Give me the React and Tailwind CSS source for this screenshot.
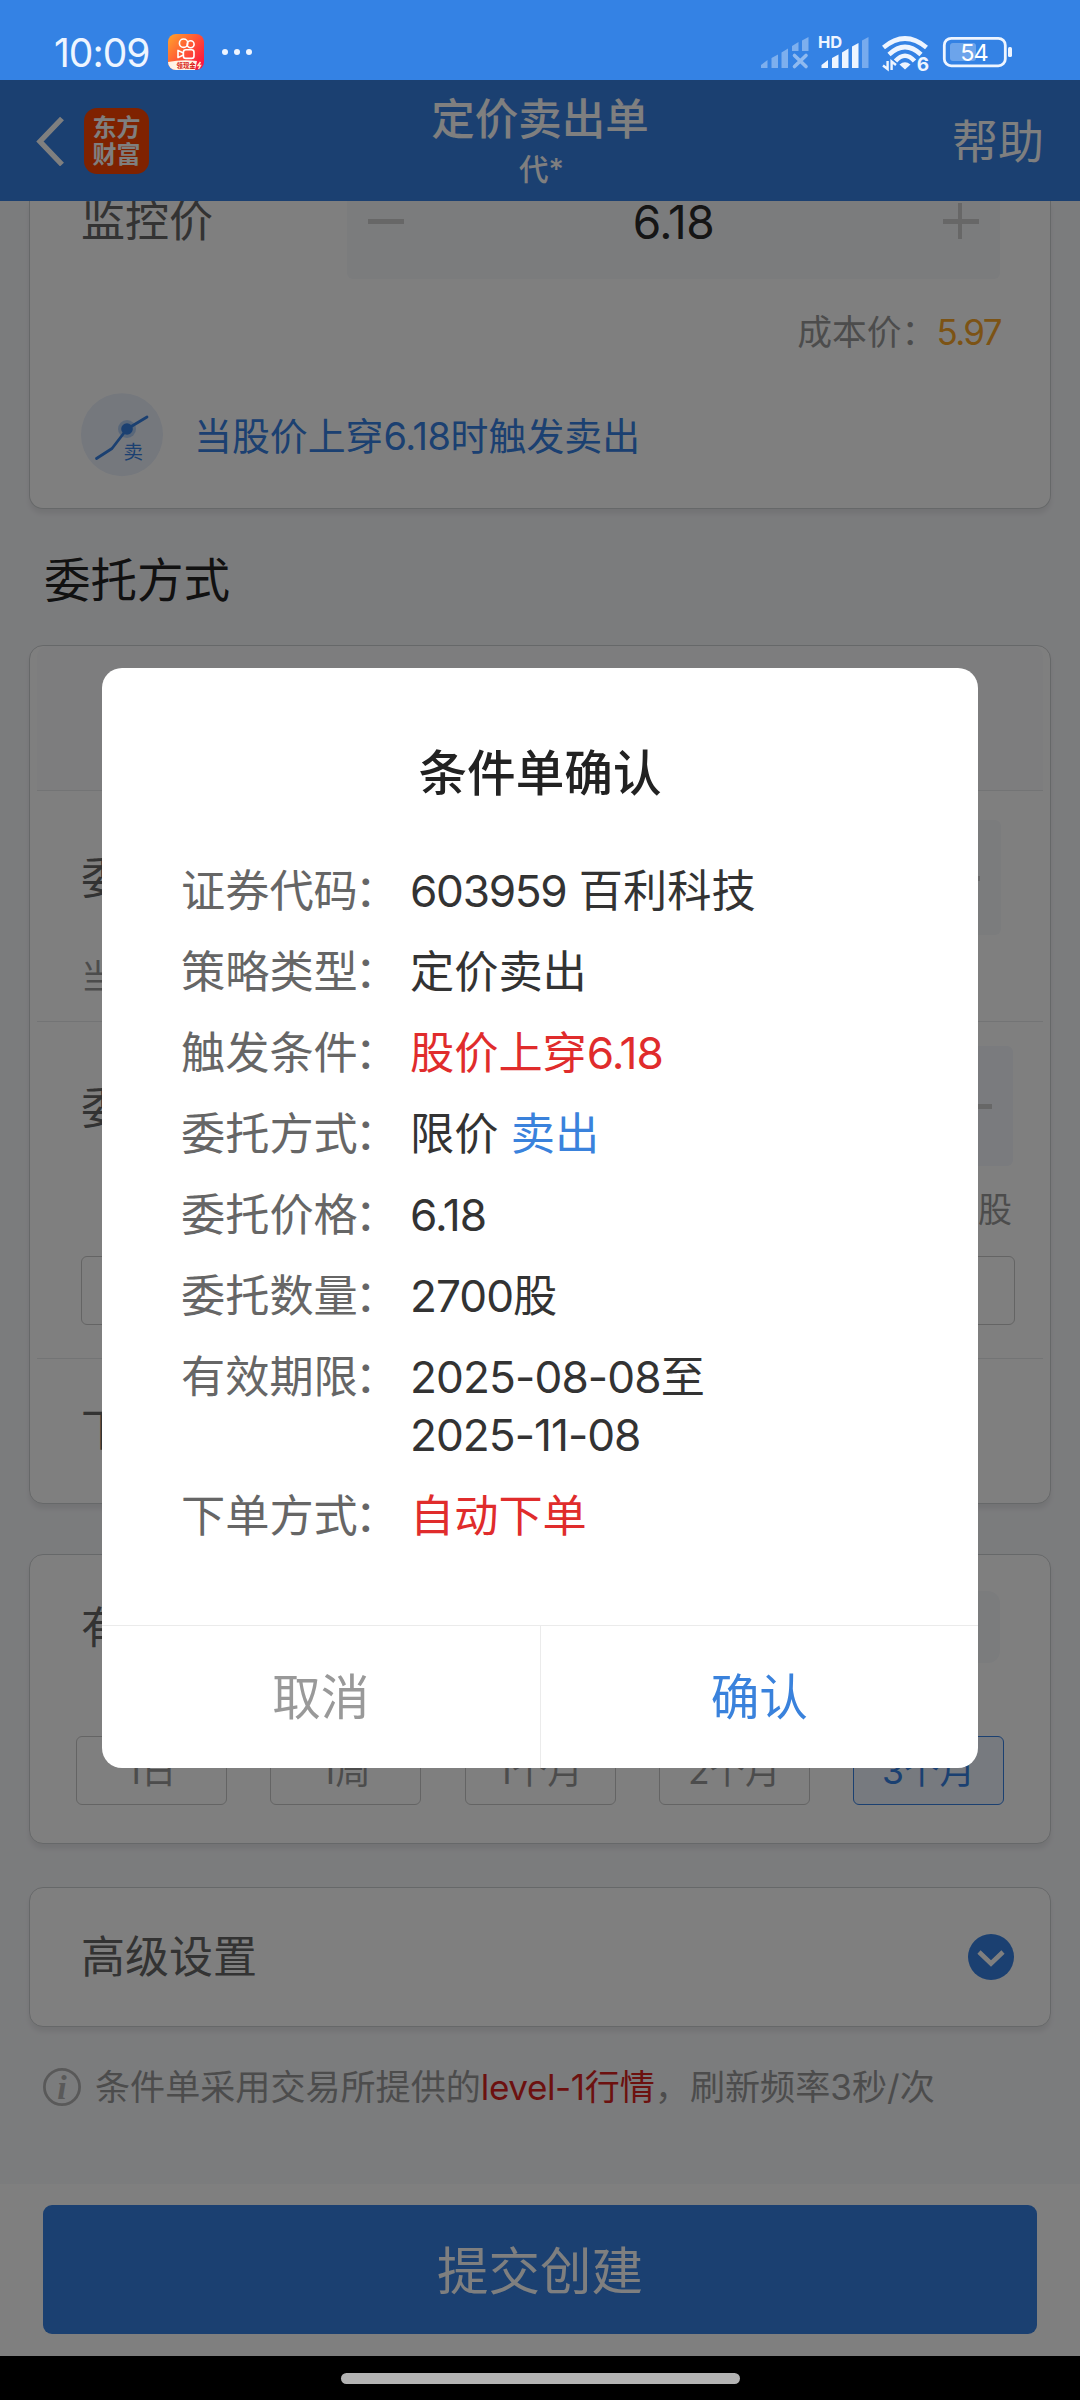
import React from "react";

const CARD =
  "mx-[29px] flex flex-col rounded-[14px] border border-[#cdd0d2] bg-white shadow-[0_5px_5px_rgba(0,0,0,0.07)]";

function AppBadge() {
  return (
    <svg width="36" height="36" viewBox="0 0 36 36">
      <defs>
        <linearGradient id="kg" x1="0" y1="0" x2="1" y2="0.8">
          <stop offset="0" stopColor="#ffa52b" />
          <stop offset="0.5" stopColor="#ff5a35" />
          <stop offset="1" stopColor="#fb1440" />
        </linearGradient>
        <clipPath id="kc">
          <rect width="36" height="36" rx="8" />
        </clipPath>
      </defs>
      <g clipPath="url(#kc)">
        <rect width="36" height="36" fill="url(#kg)" />
        <path d="M0 28 Q14 25 29 27 L27 36 H0Z" fill="#fff3e6" />
        <text x="8.6" y="34" fontSize="6.4" fontWeight="700" fill="#d8180f" fontFamily="Noto Sans CJK SC, sans-serif">领现金</text>
        <path d="M32.5 28 L30 31.5 H32.5 L30.5 35" stroke="#ffe9c0" strokeWidth="1.5" fill="none" />
        <g fill="none" stroke="#fff" strokeWidth="1.6">
          <circle cx="15.6" cy="9.2" r="4.2" />
          <circle cx="22.6" cy="10.2" r="3.5" />
          <rect x="15.4" y="15.8" width="10.6" height="8.6" rx="2.4" />
          <path d="M15.4 19 L10 16.4 V23.6 L15.4 21" strokeLinejoin="round" />
        </g>
      </g>
    </svg>
  );
}

function StatusIcons() {
  return (
    <svg width="256" height="40" viewBox="760 33 256 40" className="font-['Inter','Noto_Sans_CJK_SC',sans-serif]">
      <path
        d="M761 68 V65 L767.5 60 V68Z M771.5 68 V58 L778 54.5 V68Z M781.5 68 V52.5 L788 48.5 V68Z M792 51 V46 L798.5 42 V51Z M802 51 V40.5 L808.5 37 V51Z"
        fill="#fff"
        opacity="0.36"
      />
      <path d="M794.5 55.5 L806 66.5 M806 55.5 L794.5 66.5" stroke="#fff" strokeWidth="3.6" strokeLinecap="round" opacity="0.45" />
      <text x="818" y="48" fontSize="16.5" fontWeight="700" fill="#eef5ff" letterSpacing="-0.2">HD</text>
      <g fill="#eef5ff">
        <path d="M821.5 68 V65 L828 60 V68Z M832 68 V58 L838.5 54.5 V68Z M842 68 V52.5 L848.5 48.5 V68Z M852 68 V46.5 L858.5 43 V68Z" />
        <path d="M862 68 V40.5 L868.5 37 V68Z" opacity="0.36" />
      </g>
      <g fill="none" stroke="#eef5ff" strokeWidth="4.6">
        <path d="M883.5 47.5 Q905 29.5 926.5 47.5" />
        <path d="M889 54.5 Q905 39.5 921 54.5" />
        <path d="M895.5 61 Q905 50.5 914.5 61" />
      </g>
      <path d="M899.5 64.5 Q905 60 910.5 64.5 L905 69.5Z" fill="#eef5ff" />
      <path d="M887.6 61 V69 L883 65.5 M891.6 70 V61.5 L896 65" stroke="#eef5ff" strokeWidth="2.4" fill="none" />
      <text x="916.8" y="70.5" fontSize="19" fontWeight="700" fill="#eef5ff">6</text>
      <rect x="944.3" y="38.3" width="61" height="27.6" rx="7" fill="none" stroke="#eef5ff" strokeWidth="2.8" />
      <rect x="950" y="43" width="26" height="18" rx="3" fill="#fff" opacity="0.28" />
      <rect x="1008" y="47" width="4" height="10" rx="1.6" fill="#eef5ff" />
      <text x="974" y="60.8" fontSize="23.5" textAnchor="middle" fill="#fff" fontWeight="400" letterSpacing="-1">54</text>
    </svg>
  );
}

function StatusBar() {
  return (
    <div className="flex h-[80px] items-start bg-[#3482e4] text-[#eef5ff]">
      <div className="mt-[32px] ml-[54px] w-[114px] text-[39px] leading-[41px] tracking-[-1px]">10:09</div>
      <div className="mt-[34px]"><AppBadge /></div>
      <div className="mt-[49px] ml-[18px] flex gap-[6px]">
        <i className="size-[6px] rounded-full bg-[#eef5ff]" />
        <i className="size-[6px] rounded-full bg-[#eef5ff]" />
        <i className="size-[6px] rounded-full bg-[#eef5ff]" />
      </div>
      <div className="mt-[33px] mr-[64px] ml-auto"><StatusIcons /></div>
    </div>
  );
}

function Header() {
  return (
    <header className="flex h-[121px] shrink-0 items-center bg-[#3680e2] text-white">
      <div className="flex w-[320px] items-center pl-[36px]">
        <svg width="28" height="50" viewBox="0 0 28 50" className="shrink-0">
          <path d="M26 2.5 L4 25.5 L26 48.5" fill="none" stroke="#fff" strokeWidth="5.4" />
        </svg>
        <div className="ml-[20px] flex h-[66px] w-[65px] flex-col items-center justify-center rounded-[13px] bg-[#ff4400] text-[24px] leading-[27px] font-bold">
          <span>东方</span>
          <span>财富</span>
        </div>
      </div>
      <div className="flex flex-1 flex-col items-center">
        <div className="mt-px text-[43.5px] leading-[56px] font-medium">定价卖出单</div>
        <div className="pl-[3px] text-[29.5px] leading-[44px] font-medium">代*</div>
      </div>
      <div className="w-[320px] pr-[36px] text-right text-[46px] leading-[60px]">帮助</div>
    </header>
  );
}

function Minus() {
  return <span className="block h-[5px] w-[36px] bg-[#cfcfcf]" />;
}

function Plus() {
  return (
    <svg width="36" height="36" viewBox="0 0 36 36">
      <path d="M0 18.5 H36" stroke="#cfcfcf" strokeWidth="5" />
      <path d="M17 0 V36" stroke="#cfcfcf" strokeWidth="4" />
    </svg>
  );
}

function TriggerIcon() {
  return (
    <svg width="82" height="84" viewBox="81 394 82 84" className="shrink-0 font-['Inter','Noto_Sans_CJK_SC',sans-serif]">
      <ellipse cx="122" cy="435.7" rx="41" ry="41.5" fill="#eaf0fb" />
      <path d="M96.5 459.5 L112 449.5 L127 430 L147 418" fill="none" stroke="#3680e2" strokeWidth="2.8" strokeLinecap="round" strokeLinejoin="round" />
      <circle cx="127" cy="430" r="9" fill="#3680e2" opacity="0.3" />
      <circle cx="127" cy="430" r="5.8" fill="#3680e2" />
      <text x="123.5" y="460" fontSize="19.5" fill="#3680e2">卖</text>
    </svg>
  );
}

function MonitorCard() {
  return (
    <section className="mx-[29px] flex h-[308px] flex-col rounded-b-[14px] border border-t-0 border-[#cdd0d2] bg-white pr-[50px] pl-[51px] shadow-[0_5px_5px_rgba(0,0,0,0.07)]">
      <div className="flex h-[78px] justify-between overflow-hidden">
        <div className="-mt-[2px] text-[44px] leading-[44px] text-[#666]">监控价</div>
        <div className="-mt-[38px] flex h-[116px] w-[653px] items-center justify-between rounded-[6px] bg-[#f7f8fb] px-[21px]">
          <Minus />
          <span className="pt-px text-[46px] leading-[46px] tracking-[-0.5px] text-[#2b2b2b]">6.18</span>
          <Plus />
        </div>
      </div>
      <div className="flex h-[105px] items-center justify-end text-[34.8px] leading-[40px] text-[#999]">
        成本价：
        <span className="-mr-px text-[35px] tracking-[-1.6px] text-[#f9a72a]">5.97</span>
      </div>
      <div className="flex h-[101px] items-center text-[37.9px] leading-[44px] text-[#3680e2]">
        <TriggerIcon />
        <span className="ml-[31px] pt-[2px]">当股价上穿<span className="tracking-[-0.4px]">6.18</span>时触发卖出</span>
      </div>
    </section>
  );
}

function OrderCard() {
  return (
    <section className={`${CARD} h-[859px]`}>
      <div className="mx-[7px] h-[145px] rounded-t-[10px] border-b border-[#e6e8ea] bg-[#fafbfd]" />
      <div className="mx-[7px] flex h-[231px] justify-between border-b border-[#e6e8ea] pr-[42px] pl-[44px]">
        <div className="mt-[64px]">
          <div className="text-[44px] leading-[46px] text-[#666]">委托价格</div>
          <div className="mt-[56px] text-[34px] leading-[40px] text-[#999]">当前价</div>
        </div>
        <div className="mt-[29px] flex h-[115px] w-[653px] items-center justify-between rounded-[6px] bg-[#f7f8fb] px-[21px]">
          <Minus />
          <Plus />
        </div>
      </div>
      <div className="mx-[7px] flex h-[337px] flex-col border-b border-[#e6e8ea] pr-[28px] pl-[44px]">
        <div className="flex justify-between">
          <div className="mt-[63px] text-[44px] leading-[46px] text-[#666]">委托数量</div>
          <div className="mt-[24px] mr-[2px] flex h-[120px] w-[500px] items-center justify-end rounded-[6px] bg-[#f4f7fc] pr-[21px]">
            <Minus />
          </div>
        </div>
        <div className="mt-[24px] pr-[3px] text-right text-[34px] leading-[40px] text-[#999]">股</div>
        <div className="mt-[26px] h-[69px] w-[934px] rounded-[6px] border border-[#c8c8c8]" />
      </div>
      <div className="mt-[48px] pl-[51px] text-[44px] leading-[46px] text-[#666]">下单方式</div>
    </section>
  );
}

const PERIODS = ["1日", "1周", "1个月", "2个月", "3个月"];

function ValidityCard() {
  return (
    <section className={`${CARD} h-[290px]`}>
      <div className="flex h-[181px] justify-between pr-[50px] pl-[51px]">
        <div className="mt-[50px] text-[44px] leading-[46px] text-[#666]">有效期限</div>
        <div className="mt-[36px] h-[72px] w-[653px] rounded-[12px] bg-[#f7f8fb]" />
      </div>
      <div className="flex justify-between px-[46px]">
        {PERIODS.map((p) => (
          <div
            key={p}
            className={
              "flex h-[69px] w-[151px] items-center justify-center rounded-[6px] border pt-[3px] text-[35.5px] leading-[40px] " +
              (p === "3个月" ? "border-[#3680e2] bg-[#eff4fe] text-[#3680e2]" : "border-[#c8c8c8] text-[#999]")
            }
          >
            {p}
          </div>
        ))}
      </div>
    </section>
  );
}

function AdvancedCard() {
  return (
    <section className={`${CARD} h-[140px]`}>
      <div className="flex flex-1 items-center justify-between pr-[36px] pl-[51px]">
        <span className="text-[44px] leading-[50px] text-[#666]">高级设置</span>
        <svg width="46" height="46" viewBox="0 0 46 46">
          <circle cx="23" cy="23" r="23" fill="#3680e2" />
          <path d="M11 18 L23 29.5 L35 18" fill="none" stroke="#fff" strokeWidth="4.6" />
        </svg>
      </div>
    </section>
  );
}

function Notice() {
  return (
    <div className="ml-[43px] flex h-[44px] items-center text-[35.1px] leading-[44px] whitespace-nowrap text-[#999]">
      <svg width="38" height="38" viewBox="0 0 38 38" className="mr-[14px] shrink-0">
        <circle cx="19" cy="19" r="17.6" fill="none" stroke="#b3b3b3" strokeWidth="2.8" />
        <text x="19" y="30.5" textAnchor="middle" fontSize="34" fontStyle="italic" fontWeight="700" fontFamily="Liberation Serif, serif" fill="#b3b3b3">i</text>
      </svg>
      条件单采用交易所提供的<span className="text-[#d8231f]"><span className="tracking-[-0.4px]">level-1</span>行情</span>，刷新频率3秒/次
    </div>
  );
}

function Row({ label, children }) {
  return (
    <div className="mb-[23px] flex text-[44.2px] leading-[58px]">
      <div className="w-[229px] shrink-0 whitespace-nowrap text-[#666]">
        {label}<span className="-ml-[3px]">：</span>
      </div>
      <div className="text-[#333]">{children}</div>
    </div>
  );
}

function Dialog() {
  return (
    <div className="absolute top-[588px] left-[102px] flex h-[1100px] w-[876px] flex-col rounded-[20px] bg-white">
      <h2 className="mt-[76px] text-center text-[48.6px] leading-[60px] font-medium text-[#222]">条件单确认</h2>
      <div className="mt-[58px] flex-1 pl-[79px]">
        <Row label="证券代码"><span className="tracking-[-1.3px]">603959</span> 百利科技</Row>
        <Row label="策略类型">定价卖出</Row>
        <Row label="触发条件"><span className="text-[#e02c2c]">股价上穿<span className="tracking-[-1px]">6.18</span></span></Row>
        <Row label="委托方式">限价 <span className="text-[#3a82dc]">卖出</span></Row>
        <Row label="委托价格"><span className="tracking-[-1px]">6.18</span></Row>
        <Row label="委托数量"><span className="tracking-[-1px]">2700</span>股</Row>
        <Row label="有效期限">
          <div><span className="tracking-[-0.9px]">2025-08-08</span>至</div>
          <div className="tracking-[-1px]">2025-11-08</div>
        </Row>
        <Row label="下单方式"><span className="text-[#e02c2c]">自动下单</span></Row>
      </div>
      <div className="flex h-[143px] border-t border-[#ebebeb] text-[48.6px] leading-[60px]">
        <button className="flex-1 border-r border-[#ebebeb] pt-[2px] text-[#999]">取消</button>
        <button className="flex-1 pt-[2px] text-[#3a82dc]">确认</button>
      </div>
    </div>
  );
}

export default function App() {
  return (
    <div className="relative flex h-[2400px] w-[1080px] flex-col overflow-hidden bg-[#f7f8fb] font-['Inter','Noto_Sans_CJK_SC',sans-serif]">
      <StatusBar />
      <Header />
      <main className="flex flex-1 flex-col overflow-hidden">
        <MonitorCard />
        <h3 className="mt-[41px] mb-[35px] ml-[44px] text-[46.5px] leading-[60px] text-[#222]">委托方式</h3>
        <OrderCard />
        <div className="h-[50px] shrink-0" />
        <ValidityCard />
        <div className="h-[43px] shrink-0" />
        <AdvancedCard />
        <div className="h-[38px] shrink-0" />
        <Notice />
      </main>
      <footer className="flex h-[172px] shrink-0 justify-center bg-white pt-[21px]">
        <button className="h-[129px] w-[994px] rounded-[9px] bg-[#3680e2] pt-[2px] text-[51.5px] leading-[60px] text-white">提交创建</button>
      </footer>
      <div className="flex h-[44px] shrink-0 justify-center bg-black pt-[17px]">
        <div className="h-[11px] w-[399px] rounded-full bg-[#b3b3b3]" />
      </div>
      <div className="absolute inset-x-0 top-[80px] bottom-[44px] bg-black/50">
        <Dialog />
      </div>
    </div>
  );
}
